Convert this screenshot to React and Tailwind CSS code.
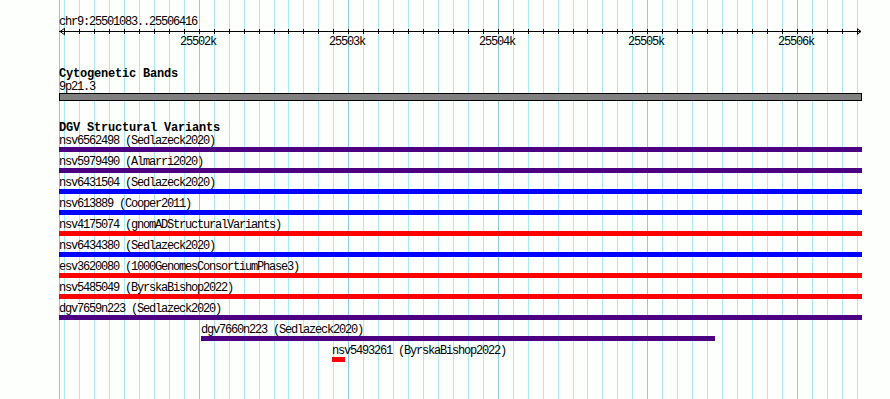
import React from 'react';

// grid positions (px) along the 803px track that starts at x=59
const GRID = Array.from({ length: 54 }, (_, k) => ({
    x: Math.round(64.2 + 14.95 * k),
    major: k % 10 === 9,
}));

const MAJOR_LABELS = ['25502k', '25503k', '25504k', '25505k', '25506k'];

const variants = [
    { id: 'nsv6562498', src: 'Sedlazeck2020', bar: 'bg-[#4b0082] w-full', pos: '' },
    { id: 'nsv5979490', src: 'Almarri2020', bar: 'bg-[#4b0082] w-full', pos: '' },
    { id: 'nsv6431504', src: 'Sedlazeck2020', bar: 'bg-[#0000ff] w-full', pos: '' },
    { id: 'nsv613889', src: 'Cooper2011', bar: 'bg-[#0000ff] w-full', pos: '' },
    { id: 'nsv4175074', src: 'gnomADStructuralVariants', bar: 'bg-[#ff0000] w-full', pos: '' },
    { id: 'nsv6434380', src: 'Sedlazeck2020', bar: 'bg-[#0000ff] w-full', pos: '' },
    { id: 'esv3620080', src: '1000GenomesConsortiumPhase3', bar: 'bg-[#ff0000] w-full', pos: '' },
    { id: 'nsv5485049', src: 'ByrskaBishop2022', bar: 'bg-[#ff0000] w-full', pos: '' },
    { id: 'dgv7659n223', src: 'Sedlazeck2020', bar: 'bg-[#4b0082] w-full', pos: '' },
    { id: 'dgv7660n223', src: 'Sedlazeck2020', bar: 'bg-[#4b0082] w-[514px]', pos: 'ml-[142px]' },
    { id: 'nsv5493261', src: 'ByrskaBishop2022', bar: 'bg-[#ff0000] w-[13px]', pos: 'ml-[273px]' },
];

const Label = ({ children, className = '' }) => (
    <div className={`h-[13px] pt-[2px] text-[12px] leading-[11px] tracking-[-1.2px] whitespace-nowrap ${className}`}>
        {children}
    </div>
);

const Heading = ({ children }) => (
    <div className="h-[13px] pt-[1px] text-[12px] leading-[13px] tracking-[-0.2px] font-bold whitespace-nowrap">
        {children}
    </div>
);

const GridLines = () => (
    <svg className="absolute inset-0" width="890" height="399" shapeRendering="crispEdges">
        <line x1="59.5" y1="0" x2="59.5" y2="399" stroke="#8ccbe0" />
        {GRID.map(g => (
            <line
                key={g.x}
                x1={g.x + 0.5}
                y1="0"
                x2={g.x + 0.5}
                y2="399"
                stroke={g.major ? '#8ccbe0' : '#a8eaf0'}
            />
        ))}
    </svg>
);

const Ruler = () => {
    const majors = GRID.filter(g => g.major);
    return (
        <div className="relative h-[20px]">
            <svg className="absolute left-0 top-0" width="803" height="10" shapeRendering="crispEdges">
                <line x1="0" y1="3.5" x2="802" y2="3.5" stroke="#000" />
                {GRID.map(g => (
                    <line key={g.x} x1={g.x - 59 + 0.5} y1="1" x2={g.x - 59 + 0.5} y2="6" stroke="#000" />
                ))}
                <polyline points="6,0 1,3.5 6,7" fill="none" stroke="#000" shapeRendering="auto" />
                <polyline points="798,0.5 802,3.5 798,6.5" fill="none" stroke="#000" shapeRendering="auto" />
            </svg>
            {majors.map((g, i) => (
                <span
                    key={g.x}
                    className="absolute top-[7px] h-[13px] pt-[2px] text-[12px] leading-[11px] tracking-[-1.2px]"
                    style={{ left: g.x - 59 - 19 }}
                >
                    {MAJOR_LABELS[i]}
                </span>
            ))}
        </div>
    );
};

const App = () => {
    return (
        <div className="relative w-[890px] h-[399px] overflow-hidden bg-[#fcfffc] text-black font-['Liberation_Mono',monospace]">
            <GridLines />
            <div className="relative w-[862px] pl-[59px] pt-[15px]">
                <Label>chr9:25501083..25506416</Label>
                <Ruler />

                <div className="mt-[19px]">
                    <Heading>Cytogenetic Bands</Heading>
                    <Label>9p21.3</Label>
                    <div className="h-[8px] w-full border border-black bg-[#808080]" />
                </div>

                <div className="mt-[20px]">
                    <Heading>DGV Structural Variants</Heading>
                    {variants.map(v => (
                        <div key={v.id} className={`h-[21px] ${v.pos}`}>
                            <Label>{v.id} ({v.src})</Label>
                            <div className={`h-[5px] ${v.bar}`} />
                        </div>
                    ))}
                </div>
            </div>
        </div>
    );
};

export default App;
